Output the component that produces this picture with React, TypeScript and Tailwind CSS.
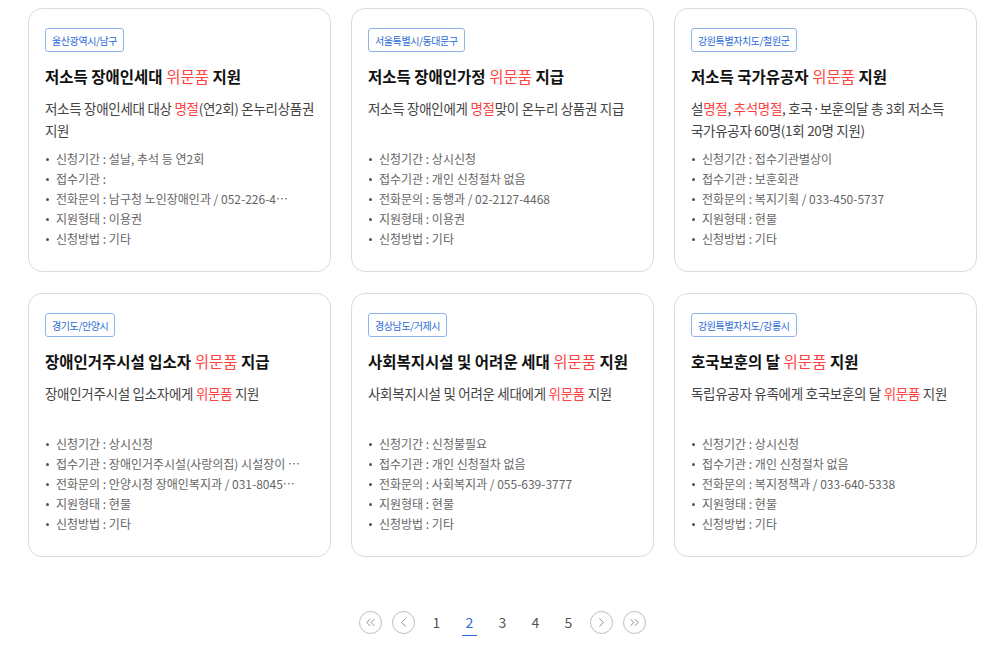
import { ChevronLeft, ChevronRight, ChevronsLeft, ChevronsRight } from "lucide-react";

type Part = { text: string; red?: boolean };

type Item = {
  region: string;
  title: Part[];
  desc: Part[];
  info: string[];
};

const ITEMS: Item[] = [
  {
    region: "울산광역시/남구",
    title: [{ text: "저소득 장애인세대 " }, { text: "위문품", red: true }, { text: " 지원" }],
    desc: [
      { text: "저소득 장애인세대 대상 " },
      { text: "명절", red: true },
      { text: "(연2회) 온누리상품권 지원" },
    ],
    info: [
      "신청기간 : 설날, 추석 등 연2회",
      "접수기관 : ",
      "전화문의 : 남구청 노인장애인과 / 052-226-4…",
      "지원형태 : 이용권",
      "신청방법 : 기타",
    ],
  },
  {
    region: "서울특별시/동대문구",
    title: [{ text: "저소득 장애인가정 " }, { text: "위문품", red: true }, { text: " 지급" }],
    desc: [
      { text: "저소득 장애인에게 " },
      { text: "명절", red: true },
      { text: "맞이 온누리 상품권 지급" },
    ],
    info: [
      "신청기간 : 상시신청",
      "접수기관 : 개인 신청절차 없음",
      "전화문의 : 동행과 / 02-2127-4468",
      "지원형태 : 이용권",
      "신청방법 : 기타",
    ],
  },
  {
    region: "강원특별자치도/철원군",
    title: [{ text: "저소득 국가유공자 " }, { text: "위문품", red: true }, { text: " 지원" }],
    desc: [
      { text: "설" },
      { text: "명절", red: true },
      { text: ", " },
      { text: "추석명절", red: true },
      { text: ", 호국·보훈의달 총 3회 저소득 국가유공자 60명(1회 20명 지원)" },
    ],
    info: [
      "신청기간 : 접수기관별상이",
      "접수기관 : 보훈회관",
      "전화문의 : 복지기획 / 033-450-5737",
      "지원형태 : 현물",
      "신청방법 : 기타",
    ],
  },
  {
    region: "경기도/안양시",
    title: [{ text: "장애인거주시설 입소자 " }, { text: "위문품", red: true }, { text: " 지급" }],
    desc: [
      { text: "장애인거주시설 입소자에게 " },
      { text: "위문품", red: true },
      { text: " 지원" },
    ],
    info: [
      "신청기간 : 상시신청",
      "접수기관 : 장애인거주시설(사랑의집) 시설장이 …",
      "전화문의 : 안양시청 장애인복지과 / 031-8045…",
      "지원형태 : 현물",
      "신청방법 : 기타",
    ],
  },
  {
    region: "경상남도/거제시",
    title: [
      { text: "사회복지시설 및 어려운 세대 " },
      { text: "위문품", red: true },
      { text: " 지원" },
    ],
    desc: [
      { text: "사회복지시설 및 어려운 세대에게 " },
      { text: "위문품", red: true },
      { text: " 지원" },
    ],
    info: [
      "신청기간 : 신청불필요",
      "접수기관 : 개인 신청절차 없음",
      "전화문의 : 사회복지과 / 055-639-3777",
      "지원형태 : 현물",
      "신청방법 : 기타",
    ],
  },
  {
    region: "강원특별자치도/강릉시",
    title: [{ text: "호국보훈의 달 " }, { text: "위문품", red: true }, { text: " 지원" }],
    desc: [
      { text: "독립유공자 유족에게 호국보훈의 달 " },
      { text: "위문품", red: true },
      { text: " 지원" },
    ],
    info: [
      "신청기간 : 상시신청",
      "접수기관 : 개인 신청절차 없음",
      "전화문의 : 복지정책과 / 033-640-5338",
      "지원형태 : 현물",
      "신청방법 : 기타",
    ],
  },
];

function Highlighted({ parts }: { parts: Part[] }) {
  return (
    <>
      {parts.map((p, i) =>
        p.red ? (
          <span key={i} className="text-[#ff4343] font-normal">
            {p.text}
          </span>
        ) : (
          <span key={i}>{p.text}</span>
        )
      )}
    </>
  );
}

function Card({ item }: { item: Item }) {
  return (
    <div className="h-[264px] rounded-[14px] border border-[#dcdcdc] bg-white pt-[19px] px-4 pb-5">
      <div className="flex h-6 w-fit items-center rounded-[3px] border border-[#8db4ec] px-[6px] text-[10px] tracking-[-0.4px] text-[#2b6bd6]">
        {item.region}
      </div>
      <h3 className="mt-3 break-keep text-[15.5px] font-bold leading-6 text-[#111]">
        <Highlighted parts={item.title} />
      </h3>
      <p className="mt-[9px] -mr-1 min-h-[44px] break-keep text-[13.5px] leading-[22px] tracking-[-0.3px] text-[#444]">
        <Highlighted parts={item.desc} />
      </p>
      <ul className="mt-2">
        {item.info.map((line, i) => (
          <li key={i} className="flex h-5 items-center text-[12px] text-[#666]">
            <span className="mr-[7px] ml-px h-[3px] w-[3px] shrink-0 rounded-full bg-[#555]" />
            <span className="overflow-hidden whitespace-pre">{line}</span>
          </li>
        ))}
      </ul>
    </div>
  );
}

function CircleButton({ children }: { children: React.ReactNode }) {
  return (
    <span className="flex h-[23px] w-[23px] items-center justify-center rounded-full border border-[#bdbdbd] text-[#777]">
      {children}
    </span>
  );
}

export default function App() {
  return (
    <div
      className="min-h-[657px] bg-white pt-2"
      style={{ fontFamily: '"Noto Sans CJK KR", "Noto Sans", sans-serif' }}
    >
      <div className="ml-7 w-[949px]">
        <div className="grid grid-cols-3 gap-x-5 gap-y-[21px]">
          {ITEMS.map((item) => (
            <Card key={item.region} item={item} />
          ))}
        </div>

        <nav className="mt-[54px] flex justify-center">
          <div className="flex items-center">
            <div className="flex w-[33px] justify-center">
              <CircleButton>
                <ChevronsLeft size={15} strokeWidth={1.3} />
              </CircleButton>
            </div>
            <div className="flex w-[33px] justify-center">
              <CircleButton>
                <ChevronLeft size={15} strokeWidth={1.3} />
              </CircleButton>
            </div>
            {[1, 2, 3, 4, 5].map((n) => (
              <div key={n} className="flex w-[33px] justify-center">
                <span
                  className={`relative text-[14px] leading-[23px] ${
                    n === 2 ? "text-[#2b6bd6]" : "text-[#555]"
                  }`}
                >
                  {n}
                  {n === 2 && (
                    <span className="absolute -left-1 -right-1 bottom-[-2px] h-[1.5px] bg-[#2b6bd6]" />
                  )}
                </span>
              </div>
            ))}
            <div className="flex w-[33px] justify-center">
              <CircleButton>
                <ChevronRight size={15} strokeWidth={1.3} />
              </CircleButton>
            </div>
            <div className="flex w-[33px] justify-center">
              <CircleButton>
                <ChevronsRight size={15} strokeWidth={1.3} />
              </CircleButton>
            </div>
          </div>
        </nav>
      </div>
    </div>
  );
}
